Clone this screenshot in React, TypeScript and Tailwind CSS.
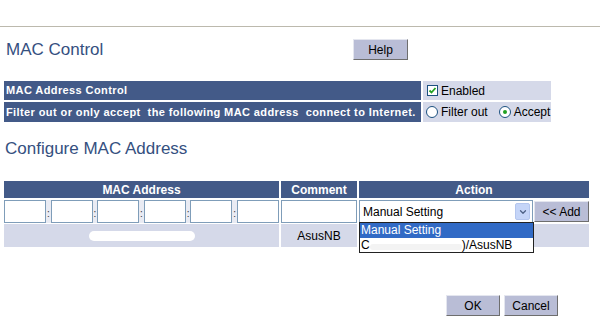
import { ChevronDown } from 'lucide-react';

const font = { fontFamily: '"Liberation Sans", Arial, sans-serif' };

const Btn = ({ label, w }: { label: string; w: string }) => (
  <button
    className={`${w} h-[21px] bg-[#b9bdd6] text-[12px] text-black border border-t-[#e4e6ef] border-l-[#e4e6ef] border-b-[#6e6e6e] border-r-[#6e6e6e] leading-none`}
  >
    {label}
  </button>
);

const Checkbox = () => (
  <span className="inline-flex w-[11px] h-[11px] border border-[#1c5180] bg-white items-center justify-center mr-[3px]">
    <svg width="9" height="9" viewBox="0 0 9 9">
      <path d="M1.5 4.5 L3.5 6.5 L7.5 2" stroke="#21a121" strokeWidth="1.8" fill="none" />
    </svg>
  </span>
);

const Radio = ({ on }: { on?: boolean }) => (
  <span className="inline-flex w-[12px] h-[12px] rounded-full border border-[#1c5180] bg-white items-center justify-center mr-[3px]">
    {on && <span className="w-[4px] h-[4px] rounded-full bg-[#21a121]" />}
  </span>
);

const MacInput = () => <div className="w-[42px] h-[23px] bg-white border border-[#7f9db9]" />;

export default function App() {
  return (
    <div className="w-[600px] h-[324px] bg-white overflow-hidden text-black" style={font}>
      <div className="h-[26px]" />
      <div className="h-px bg-[#bcb9ad]" />

      {/* title row */}
      <div className="flex items-center h-[21px] mt-[12px] pl-[6px]">
        <h1 className="w-[347px] text-[17px] leading-[20px] text-[#35507f]">MAC Control</h1>
        <Btn label="Help" w="w-[55px]" />
      </div>

      {/* control table */}
      <div className="mt-[21px] ml-[4px] grid grid-cols-[417px_128px] gap-[2px] text-[11px]">
        <div className="h-[19px] bg-[#435a88] text-white font-bold tracking-[0.4px] flex items-center pl-[2px]">
          MAC Address Control
        </div>
        <div className="h-[19px] bg-[#d5d9e9] flex items-center pl-[4px]">
          <Checkbox />
          <span className="text-[12px]">Enabled</span>
        </div>
        <div className="h-[20px] bg-[#435a88] text-white font-bold tracking-[0.4px] flex items-center pl-[2px] whitespace-pre">
          Filter out or only accept  the following MAC address  connect to Internet.
        </div>
        <div className="h-[20px] bg-[#d5d9e9] flex items-center pl-[3px] text-[12px]">
          <Radio />
          <span className="mr-[11px]">Filter out</span>
          <Radio on />
          Accept
        </div>
      </div>

      <h2 className="mt-[17px] pl-[5px] text-[17px] leading-[20px] text-[#35507f]">Configure MAC Address</h2>

      {/* MAC address table */}
      <div className="mt-[22px] ml-[4px] grid grid-cols-[275px_76px_230px] gap-x-[2px] gap-y-[1px] text-[12px]">
        <div className="h-[17px] bg-[#435a88] text-white font-bold flex items-center justify-center">MAC Address</div>
        <div className="h-[17px] bg-[#435a88] text-white font-bold flex items-center justify-center">Comment</div>
        <div className="h-[17px] bg-[#435a88] text-white font-bold flex items-center justify-center">Action</div>

        <div className="mt-[1px] h-[23px] bg-[#e9ebf3] flex items-center justify-between">
          {[0, 1, 2, 3, 4].map((i) => (
            <div key={i} className="contents">
              <MacInput />
              <span className="text-[10px] leading-none text-[#333] mt-[4px]">:</span>
            </div>
          ))}
          <MacInput />
        </div>
        <div className="mt-[1px] h-[23px] bg-[#e9ebf3] flex items-center">
          <div className="w-[76px] h-[23px] bg-white border border-[#7f9db9]" />
        </div>
        <div className="mt-[1px] h-[23px] flex items-center gap-[1px] relative">
          <div className="w-[174px] h-[23px] bg-white border border-[#7f9db9] flex items-center pl-[3px] pr-[2px]">
            <span className="flex-1">Manual Setting</span>
            <span className="w-[15px] h-[17px] bg-[#c5d5f8] border border-[#b4c6ee] rounded-[2px] flex items-center justify-center">
              <ChevronDown size={10} strokeWidth={3} className="text-[#4d6185]" />
            </span>
          </div>
          <Btn label="<< Add" w="w-[55px]" />
          <div className="absolute left-0 top-[22px] w-[175px] border border-[#222] bg-white z-10">
            <div className="h-[15px] bg-[#316ac5] text-white leading-[15px] pl-[1px]">Manual Setting</div>
            <div className="h-[14px] leading-[14px] pl-[1px] flex items-center">
              <span>C</span>
              <span className="inline-block w-[92px] h-[6px] mt-[3px] bg-[#f3f3f3] rounded-full" />
              <span>)/AsusNB</span>
            </div>
          </div>
        </div>

        <div className="h-[23px] bg-[#d5d9e9] flex items-center justify-center">
          <div className="w-[106px] h-[10px] bg-white rounded-full" />
        </div>
        <div className="h-[23px] bg-[#d5d9e9] flex items-center justify-center">AsusNB</div>
        <div className="h-[23px] bg-[#d5d9e9]" />
      </div>

      <div className="mt-[48px] flex gap-[4px] pl-[446px]">
        <Btn label="OK" w="w-[54px]" />
        <Btn label="Cancel" w="w-[54px]" />
      </div>
    </div>
  );
}
